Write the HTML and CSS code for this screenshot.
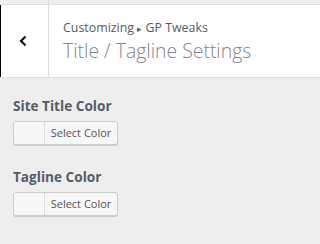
FILE: index.html
```html
<!DOCTYPE html>
<html>
<head>
<meta charset="utf-8">
<link rel="stylesheet" href="styles.css">
</head>
<body>
<div class="strip"><div class="strip-left"></div></div>
<header class="head">
  <button class="back" aria-label="Back">
    <svg width="8" height="12" viewBox="0 0 8 12"><path d="M6.5 1.5 L2 6 L6.5 10.5" fill="none" stroke="#111" stroke-width="2.2"/></svg>
  </button>
  <div class="titles">
    <div class="crumb">Customizing <span class="tri">▸</span> GP Tweaks</div>
    <div class="title">Title / Tagline Settings</div>
  </div>
</header>
<main class="controls">
  <div class="control">
    <div class="label">Site Title Color</div>
    <div class="picker"><span class="swatch"></span><span class="pick-text">Select Color</span></div>
  </div>
  <div class="control">
    <div class="label">Tagline Color</div>
    <div class="picker"><span class="swatch"></span><span class="pick-text">Select Color</span></div>
  </div>
</main>
</body>
</html>
```
FILE: styles.css
```css
html, body {
  margin: 0;
  padding: 0;
  background: #eeeeee;
  font-family: "Open Sans", "Noto Sans", sans-serif;
  color: #555d66;
  height: 244px;
  overflow: hidden;
}
.strip {
  height: 4px;
  display: flex;
}
.strip-left {
  width: 48px;
  border-right: 1px solid #dddddd;
}
.head {
  display: flex;
  height: 72px;
  background: #ffffff;
  border-top: 1px solid #dddddd;
  border-bottom: 1px solid #dddddd;
}
.back {
  padding: 0;
  margin: 0;
  border: 0;
  border-left: 1px solid #000000;
  border-right: 1px solid #dddddd;
  background: #ffffff;
  display: flex;
  align-items: center;
  justify-content: center;
  box-sizing: content-box;
  width: 47px;
}
.back svg {
  display: block;
  margin-left: -4px;
}
.titles {
  padding-left: 14px;
  padding-top: 14px;
}
.crumb {
  font-size: 12.4px;
  line-height: 18px;
  color: #555d66;
}
.tri {
  font-size: 9px;
}
.title {
  font-size: 19.4px;
  font-weight: 300;
  line-height: 26px;
  color: #82878c;
}
.controls {
  padding: 19px 13px 0;
  display: flex;
  flex-direction: column;
  gap: 23px;
}
.label {
  font-size: 13.6px;
  font-weight: 700;
  line-height: 18px;
  color: #555d66;
  margin-bottom: 6px;
}
.picker {
  display: flex;
  width: 103px;
  height: 22px;
  border: 1px solid #cccccc;
  border-radius: 3px;
  box-shadow: 0 1px 0 #cccccc;
  background: #f7f7f7;
  overflow: hidden;
}
.swatch {
  width: 30px;
  border-right: 1px solid #dddddd;
  background: #f7f7f7;
}
.pick-text {
  flex: 1;
  font-size: 11px;
  line-height: 22px;
  text-align: center;
  color: #555555;
}
```
